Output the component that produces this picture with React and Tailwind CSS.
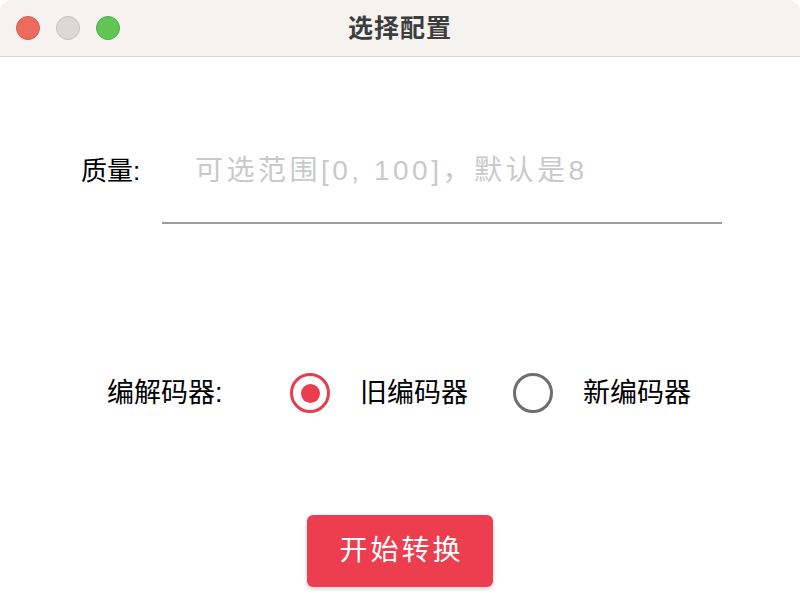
import React, { useState } from 'react'

const FONT = { fontFamily: '"Liberation Sans", "Noto Sans CJK SC", sans-serif' }

const Radio = ({ checked, label, onClick, className }) => (
  <button type="button" onClick={onClick} className={`flex items-center ${className}`}>
    <span
      className={`w-[40px] h-[40px] rounded-full flex items-center justify-center border-[3.5px] ${
        checked ? 'border-[#e93d4d]' : 'border-[#6e6e6e]'
      }`}
    >
      {checked && <span className="w-[19px] h-[19px] rounded-full bg-[#e93d4d]" />}
    </span>
    <span className="ml-[30px] text-[27px] text-black leading-none">{label}</span>
  </button>
)

export default function App() {
  const [codec, setCodec] = useState('old')

  return (
    <div style={FONT} className="w-[800px] h-[600px] bg-white overflow-hidden">
      <div className="w-full h-full rounded-t-[12px] overflow-hidden flex flex-col bg-white">
        {/* title bar */}
        <div className="h-[57px] shrink-0 bg-[#f6f2ef] border-b border-[#d6d3d1] relative flex items-center justify-center">
          <div className="absolute left-[16px] top-[16px] flex gap-[16px]">
            <span className="w-[24px] h-[24px] rounded-full bg-[#ee6a5f] border border-[#d65a50]" />
            <span className="w-[24px] h-[24px] rounded-full bg-[#dcd8d6] border border-[#c4c0be]" />
            <span className="w-[24px] h-[24px] rounded-full bg-[#61c554] border border-[#52ac46]" />
          </div>
          <span className="text-[25px] font-bold text-[#3d3d3d] tracking-[1px] pt-[1px]">选择配置</span>
        </div>

        {/* quality */}
        <div className="flex items-center mt-[62px] pl-[81px]">
          <span className="w-[81px] text-[26px] text-black">质量:</span>
          <input
            className="w-[560px] h-[105px] border-b-2 border-[#9b9b9b] outline-none pl-[33px] text-[28px] tracking-[3.5px] text-black placeholder:text-[#c9c9c9]"
            placeholder="可选范围[0, 100]，默认是8"
          />
        </div>

        {/* codec */}
        <div className="flex items-center mt-[149px] pl-[107px] h-[40px]">
          <span className="w-[183px] text-[27px] text-black">编解码器:</span>
          <Radio checked={codec === 'old'} label="旧编码器" onClick={() => setCodec('old')} />
          <Radio
            checked={codec === 'new'}
            label="新编码器"
            onClick={() => setCodec('new')}
            className="ml-[45px]"
          />
        </div>

        {/* submit */}
        <div className="flex justify-center mt-[102px]">
          <button className="w-[186px] h-[72px] rounded-[6px] bg-[#ec3e4e] text-white text-[28px] tracking-[3px] pl-[3px] shadow-[0_2px_4px_rgba(0,0,0,0.18)]">
            开始转换
          </button>
        </div>
      </div>
    </div>
  )
}
